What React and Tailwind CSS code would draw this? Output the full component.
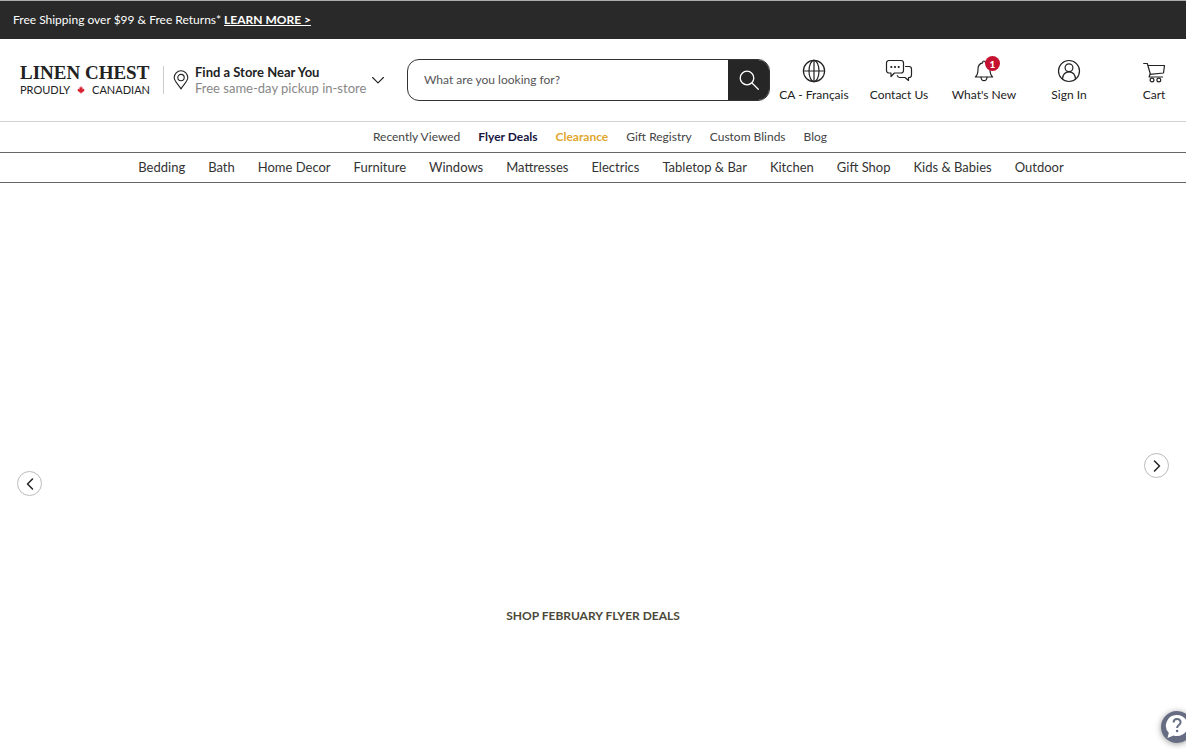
const primaryLinks = [
  'Bedding', 'Bath', 'Home Decor', 'Furniture', 'Windows', 'Mattresses',
  'Electrics', 'Tabletop & Bar', 'Kitchen', 'Gift Shop', 'Kids & Babies', 'Outdoor',
];

const quickLinks = [
  { label: 'Recently Viewed', style: 'text-[#444]' },
  { label: 'Flyer Deals', style: 'font-bold text-[#17153f]' },
  { label: 'Clearance', style: 'font-bold text-[#dfa62c]' },
  { label: 'Gift Registry', style: 'text-[#444]' },
  { label: 'Custom Blinds', style: 'text-[#444]' },
  { label: 'Blog', style: 'text-[#444]' },
];

function Icon({ children, className = 'size-6', viewBox = '0 0 24 24', width = 1.2 }) {
  return (
    <svg className={className} viewBox={viewBox} fill="none" stroke="currentColor" strokeWidth={width} strokeLinecap="round" strokeLinejoin="round" aria-hidden="true">
      {children}
    </svg>
  );
}

const GlobeIcon = () => (
  <Icon>
    <circle cx="12" cy="12" r="10.6" />
    <ellipse cx="12" cy="12" rx="5" ry="10.6" />
    <path d="M1.4 12h21.2M12 1.4v21.2" />
  </Icon>
);

const ChatIcon = () => (
  <Icon className="h-6 w-7" viewBox="0 0 28 24">
    <path d="M4 1.500h12A2.500 2.500 0 0 1 18.500 4v7.500A2.500 2.500 0 0 1 16 14h-6.500L6 17.500V14H4a2.500 2.500 0 0 1-2.500-2.500V4A2.500 2.500 0 0 1 4 1.500z" />
    <path d="M20.500 7.500H24a2.500 2.500 0 0 1 2.500 2.500v6a2.500 2.500 0 0 1-2.500 2.500h-.5V21.500L20 18.500h-5.500a2.500 2.500 0 0 1-2.200-2" />
    <path d="M6.300 8h.01M10 8h.01M13.700 8h.01" strokeWidth="2.200" />
  </Icon>
);

const BellIcon = () => (
  <Icon>
    <path d="M10.600 3.800c0-2.400 2.800-2.400 2.800 0 3 .7 4.600 3 4.600 6.200 0 4.200.5 6.200 2.600 8H3.400C5.500 16.200 6 14.200 6 10c0-3.200 1.600-5.500 4.600-6.200z" />
    <path d="M9 18.200c.4 4.600 5.600 4.600 6 0" />
  </Icon>
);

const UserIcon = () => (
  <Icon>
    <circle cx="12" cy="12" r="10.500" />
    <circle cx="12" cy="8.700" r="3.900" />
    <path d="M5.500 20c.3-4.500 2.800-7.200 6.500-7.200s6.200 2.700 6.500 7.200" />
  </Icon>
);

const CartIcon = () => (
  <Icon>
    <path d="M1.700 4.500h3.600l3.200 11M6 6.500h16.500l-1 7.500L8 15.300l-.9 2.700h13.500" />
    <circle cx="10" cy="21" r="1.900" />
    <circle cx="16.800" cy="21" r="1.900" />
  </Icon>
);

const actions = [
  { label: 'CA - Français', icon: GlobeIcon },
  { label: 'Contact Us', icon: ChatIcon },
  { label: "What's New", icon: BellIcon, badge: 1 },
  { label: 'Sign In', icon: UserIcon },
  { label: 'Cart', icon: CartIcon },
];

function Logo() {
  return (
    <a href="#home" className="w-[130px] text-[#222]">
      <span className="block whitespace-nowrap font-['Liberation_Serif',serif] text-[19px] font-bold leading-5">LINEN CHEST</span>
      <span className="flex items-center justify-between text-[11px] leading-[14px]">
        PROUDLY
        <svg viewBox="0 0 16 18" className="h-2 w-2 fill-[#d92231]" aria-hidden="true">
          <path d="M8 0 10 4l2-1-.8 5L14 5.500l.5 2L16 8l-1 2 .5 1-4.500 3 .3 1.300L8.500 15v3h-1v-3l-2.800.3L5 14 .5 11l.5-1-1-2 1.500-.5.5-2L4.800 8 4 3l2 1z" />
        </svg>
        CANADIAN
      </span>
    </a>
  );
}

export default function App() {
  return (
    <div className="relative flex min-h-screen flex-col overflow-hidden bg-white pr-[14px] font-['Lato',sans-serif] text-[#222]">
      <div className="border-t border-[#a9aeac] bg-[#292929] px-[13px] py-[9px] text-[12px] leading-5 text-white">
        Free Shipping over $99 &amp; Free Returns*{' '}
        <a href="#shipping" className="font-bold underline">LEARN MORE &gt;</a>
      </div>

      <header>
        <div className="flex h-[83px] items-center border-b border-[#d2d2d2] pl-5">
          <Logo />
          <button type="button" className="ml-[13px] flex items-center text-left">
            <span className="h-7 w-px bg-[#ccc]" />
            <Icon className="ml-[9px] h-5 w-4" viewBox="0 0 16 20" width={1.1}>
              <path d="M8 19C5.500 14.500 1.200 11.500 1.200 7.600a6.800 6.800 0 0 1 13.600 0C14.800 11.500 10.500 14.500 8 19z" />
              <circle cx="8" cy="7.600" r="3.200" />
            </Icon>
            <span className="ml-[6px] w-[177px] whitespace-nowrap text-[13px] leading-4">
              <span className="block font-bold">Find a Store Near You</span>
              <span className="block text-[#888]">Free same-day pickup in-store</span>
            </span>
            <Icon className="h-3 w-3" viewBox="0 0 12 12" width={1.1}>
              <path d="m.6 3.500 5.400 5.300 5.400-5.300" />
            </Icon>
          </button>

          <form className="ml-[23px] flex h-[42px] flex-1 overflow-hidden rounded-xl border border-[#333]" onSubmit={(e) => e.preventDefault()}>
            <input type="search" aria-label="Search" placeholder="What are you looking for?" className="min-w-0 flex-1 px-4 text-[12px] outline-none placeholder:text-[#555]" />
            <button type="submit" aria-label="Submit search" className="flex w-[41px] items-center justify-center bg-[#262626] text-white">
              <Icon className="size-5" viewBox="0 0 20 20" width={1.3}>
                <circle cx="8" cy="8" r="6.800" />
                <path d="m13 13 6.300 6.300" />
              </Icon>
            </button>
          </form>

          <div className="ml-3 flex gap-[21px] pt-1">
            {actions.map(({ label, icon: Glyph, badge }) => (
              <a key={label} href="#account" className="flex w-16 flex-col items-center gap-[2px] whitespace-nowrap text-[12px] leading-5">
                <span className="relative">
                  <Glyph />
                  {badge && (
                    <span className="absolute -top-[3px] left-[13px] flex size-[15px] items-center justify-center rounded-full bg-[#c41230] text-[10px] font-black leading-none text-white">{badge}</span>
                  )}
                </span>
                {label}
              </a>
            ))}
          </div>
        </div>

        <nav aria-label="Quick links" className="flex h-[31px] items-center justify-center gap-[18px] border-b border-[#666] pl-[14px] text-[12px]">
          {quickLinks.map(({ label, style }) => (
            <a key={label} href="#deals" className={style}>{label}</a>
          ))}
        </nav>
        <nav aria-label="Departments" className="flex h-[30px] items-center justify-center gap-[23px] border-b border-[#666] pl-4 text-[13px] text-[#333]">
          {primaryLinks.map((label) => (
            <a key={label} href="#department" className="whitespace-nowrap">{label}</a>
          ))}
        </nav>
      </header>

      <main className="relative flex flex-1 flex-col items-center justify-end pb-[124px]">
        <button type="button" aria-label="Previous slide" className="absolute left-[17px] top-[288px] flex size-[25px] items-center justify-center rounded-full border border-[#bbb]">
          <Icon className="h-3 w-2" viewBox="0 0 8 12" width={1.5}><path d="M6.500 1 1.500 6l5 5" /></Icon>
        </button>
        <button type="button" aria-label="Next slide" className="absolute right-[17px] top-[270px] flex size-[25px] items-center justify-center rounded-full border border-[#bbb]">
          <Icon className="h-3 w-2" viewBox="0 0 8 12" width={1.5}><path d="m1.500 1 5 5-5 5" /></Icon>
        </button>
        <a href="#flyer" className="text-[12px] font-bold leading-5 text-[#4b4939]">SHOP FEBRUARY FLYER DEALS</a>

        <div className="absolute bottom-0 right-0 flex h-[46px] w-9 items-center overflow-hidden pl-[11px]">
          <button type="button" aria-label="Help" className="size-8 shrink-0 rounded-full bg-[#666d82] shadow-[0_1px_6px_rgba(0,0,0,0.4)]">
            <svg viewBox="0 0 32 32" className="size-8" aria-hidden="true">
              <path d="M16 4a11 10.500 0 1 1-3.500 20.500L6.500 27l1.300-5.200A10.600 10.600 0 0 1 16 4z" fill="#fff" />
              <path d="M12.600 11.500c0-4.500 7-4.500 7-.2 0 2.800-3.500 2.700-3.500 5.700" fill="none" stroke="#666d82" strokeWidth="2" />
              <circle cx="16.100" cy="20" r="1.300" fill="#666d82" />
            </svg>
          </button>
        </div>
      </main>
    </div>
  );
}
